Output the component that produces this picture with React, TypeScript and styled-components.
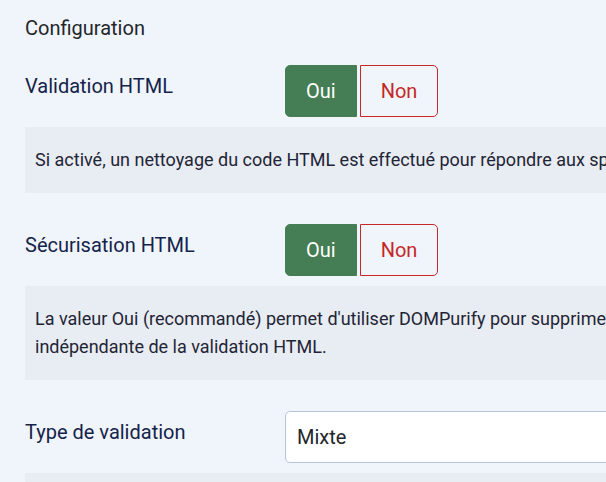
import React, { useState } from 'react';
import styled, { createGlobalStyle } from 'styled-components';

const GlobalStyle = createGlobalStyle`
    html, body {
        margin: 0;
        padding: 0;
        overflow: hidden;
        background: #f0f4fb;
        font-family: Roboto, "Noto Sans", sans-serif;
    }
`;

const Fieldset = styled.section`
    padding: 14px 0 0 25px;
    width: 900px;
`;

const Legend = styled.div`
    font-size: 20px;
    line-height: 28px;
    color: #22262a;
`;

const Group = styled.div<{ first?: boolean }>`
    margin-top: ${(p) => (p.first ? '23px' : '31px')};
`;

const Row = styled.div`
    display: grid;
    grid-template-columns: 260px 1fr;
    align-items: start;
`;

const Label = styled.label`
    padding-top: 6px;
    font-size: 20px;
    line-height: 30px;
    color: #14234a;
`;

const Switcher = styled.div`
    display: flex;
    gap: 3px;
`;

const Option = styled.button<{ active?: boolean; side: 'left' | 'right' }>`
    height: 52px;
    padding: 0 20px;
    font-family: inherit;
    font-size: 20px;
    border: 1px solid ${(p) => (p.active ? '#457d54' : '#c52827')};
    background: ${(p) => (p.active ? '#457d54' : 'transparent')};
    color: ${(p) => (p.active ? '#fff' : '#c52827')};
    border-radius: ${(p) => (p.side === 'left' ? '5px 0 0 5px' : '0 5px 5px 0')};
    cursor: pointer;
`;

const Select = styled.div`
    box-sizing: border-box;
    width: 420px;
    height: 52px;
    padding: 0 11px;
    display: flex;
    align-items: center;
    background: #fff;
    border: 1px solid #b6c3d8;
    border-radius: 5px;
    font-size: 20px;
    color: #22262a;
`;

const Description = styled.div`
    margin-top: 10px;
    padding: 19px 10px;
    background: #e8ecf3;
    font-size: 18px;
    line-height: 28px;
    color: #1f2535;
    white-space: nowrap;
`;

const YesNo = ({ value, onChange }: { value: boolean; onChange: Function }) => (
    <Switcher>
        <Option side="left" active={value} onClick={() => onChange(true)}>Oui</Option>
        <Option side="right" active={!value} onClick={() => onChange(false)}>Non</Option>
    </Switcher>
);

const App = () => {
    const [validate, setValidate] = useState(true);
    const [purify, setPurify] = useState(true);

    return (
        <>
            <GlobalStyle />
            <Fieldset>
                <Legend>Configuration</Legend>

                <Group first>
                    <Row>
                        <Label>Validation HTML</Label>
                        <YesNo value={validate} onChange={setValidate} />
                    </Row>
                    <Description>
                        Si activé, un nettoyage du code HTML est effectué pour répondre aux spécifications du format HTML choisi.
                    </Description>
                </Group>

                <Group>
                    <Row>
                        <Label>Sécurisation HTML</Label>
                        <YesNo value={purify} onChange={setPurify} />
                    </Row>
                    <Description>
                        La valeur Oui (recommandé) permet d'utiliser DOMPurify pour supprimer le code potentiellement dangereux. Cette option est
                        <br />
                        indépendante de la validation HTML.
                    </Description>
                </Group>

                <Group>
                    <Row>
                        <Label>Type de validation</Label>
                        <Select>Mixte</Select>
                    </Row>
                    <Description>
                        Définit le mode de validation appliqué au contenu.
                    </Description>
                </Group>
            </Fieldset>
        </>
    );
};

export default App;
